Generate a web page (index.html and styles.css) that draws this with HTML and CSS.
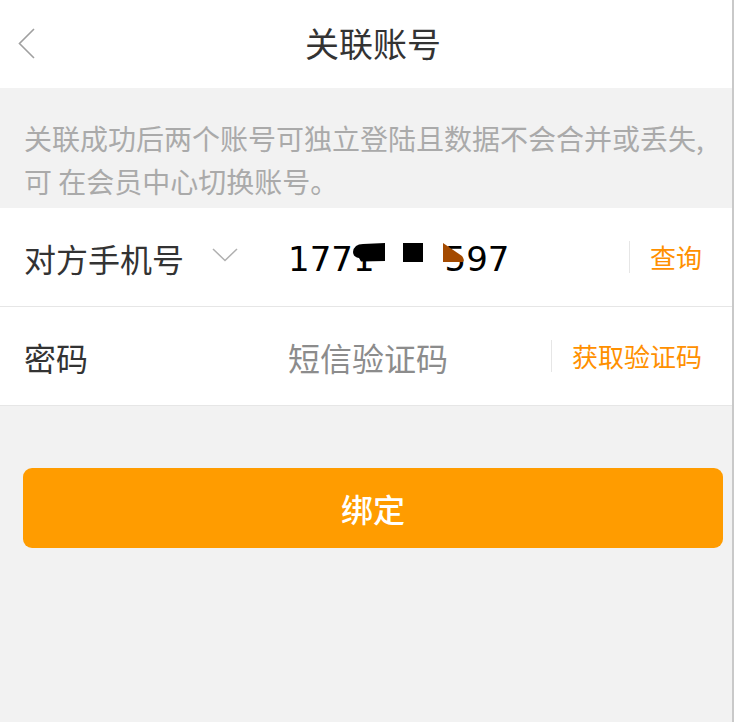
FILE: index.html
```html
<!DOCTYPE html>
<html lang="zh-CN">
<head>
<meta charset="utf-8">
<title>关联账号</title>
<link rel="stylesheet" href="styles.css">
</head>
<body>
<div class="page">
  <header class="header">
    <div class="back">
      <svg width="18" height="32" viewBox="0 0 18 32"><path d="M16 1 L1.5 15.5 L16 30" fill="none" stroke="#a0a0a0" stroke-width="1.6"/></svg>
    </div>
    <h1 class="title">关联账号</h1>
    <div></div>
  </header>

  <p class="notice">关联成功后两个账号可独立登陆且数据不会合并或丢失,可 在会员中心切换账号。</p>

  <div class="row">
    <div class="label-group">
      <span class="label">对方手机号</span>
      <svg class="chev" width="26" height="14" viewBox="0 0 26 14"><path d="M1 1 L13 12.5 L25 1" fill="none" stroke="#b0b0b0" stroke-width="1.5"/></svg>
    </div>
    <div class="value">
      <span class="phone">1771</span><span class="gap"></span><span class="phone">597</span>
      <svg class="mask" width="120" height="20" viewBox="0 0 120 20">
        <path d="M3 9 Q4 1 13 1 L35 0 L35 18 L11 18.5 L9 15 Q3 14 3 9 Z" fill="#000"/>
        <rect x="53" y="0" width="20" height="19" fill="#000"/>
        <path d="M93 0 L112 13 Q115 17 113 19 L93 19 Z" fill="#a44a00"/>
      </svg>
    </div>
    <span class="divider"></span>
    <span class="action">查询</span>
  </div>

  <div class="row">
    <div class="label-group">
      <span class="label">密码</span>
    </div>
    <div class="value">
      <span class="placeholder">短信验证码</span>
    </div>
    <span class="divider"></span>
    <span class="action">获取验证码</span>
  </div>

  <button class="submit" type="button">绑定</button>
</div>
</body>
</html>
```

FILE: styles.css
```css
* { box-sizing: border-box; }

html, body {
  margin: 0;
  padding: 0;
  background: #f2f2f2;
}

body {
  font-family: "Noto Sans CJK SC", "Noto Sans", sans-serif;
}

.page {
  width: 734px;
  height: 722px;
  border-right: 2px solid #c9c9c9;
  background: #f2f2f2;
  overflow: hidden;
}

.header {
  height: 88px;
  background: #fff;
  display: grid;
  grid-template-columns: 60px 1fr 46px;
  align-items: center;
}

.back {
  padding-left: 18px;
  display: flex;
  align-items: center;
}

.title {
  margin: 0;
  text-align: center;
  font-size: 34px;
  font-weight: 400;
  color: #333;
  line-height: 1;
  padding-bottom: 2px;
}

.notice {
  margin: 0;
  padding: 29px 24px 5px 24px;
  font-size: 28px;
  line-height: 43px;
  color: #aaaaaa;
}

.row {
  height: 99px;
  background: #fff;
  border-bottom: 1px solid #e6e6e6;
  display: flex;
  align-items: center;
  padding: 0 30px 0 24px;
}

.label-group {
  width: 264px;
  display: flex;
  align-items: center;
}

.label {
  font-size: 32px;
  color: #333;
  line-height: 1;
  padding-top: 2px;
}

.chev {
  margin-left: 28px;
  margin-top: -4px;
}

.value {
  flex: 1;
  align-self: stretch;
  position: relative;
  display: flex;
  align-items: center;
}

.phone {
  font-family: "DejaVu Sans", sans-serif;
  font-size: 34px;
  color: #000;
  line-height: 1;
  padding-top: 4px;
}

.gap {
  display: inline-block;
  width: 70px;
}

.mask {
  position: absolute;
  left: 62px;
  top: 35px;
}

.placeholder {
  font-size: 32px;
  color: #8c8c8c;
  line-height: 1;
  padding-top: 2px;
}

.divider {
  width: 1px;
  height: 32px;
  background: #e6e6e6;
  margin-right: 20px;
}

.action {
  font-size: 26px;
  color: #ff9000;
  line-height: 1;
}

.submit {
  display: block;
  margin: 62px 0 0 23px;
  width: 700px;
  height: 80px;
  border: 0;
  border-radius: 9px;
  background: #ff9c00;
  color: #fff;
  font-family: "Noto Sans CJK SC", sans-serif;
  font-size: 32px;
  font-weight: 500;
  padding: 0;
}
```
